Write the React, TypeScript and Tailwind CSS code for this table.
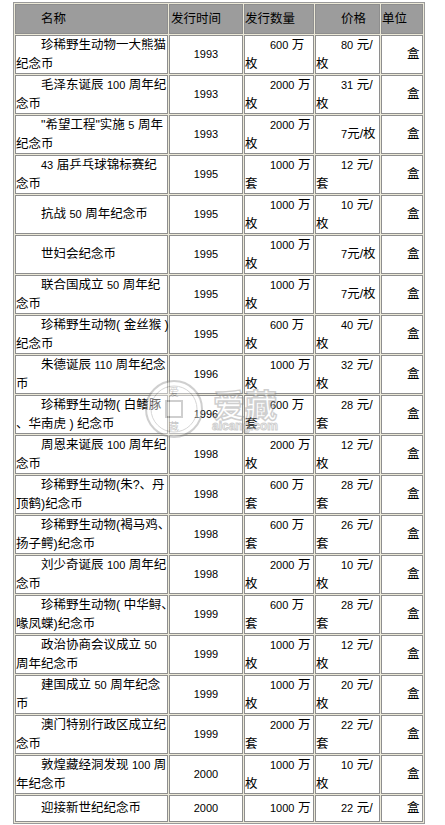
import React from 'react';

type Row = {
  name: string[];
  year: string;
  qty: string[];
  price: string[];
  short?: boolean;
};

const rows: Row[] = [
  { name: ['珍稀野生动物一大熊猫', '纪念币'], year: '1993', qty: ['600 万', '枚'], price: ['80 元/', '枚'] },
  { name: ['毛泽东诞辰 100 周年纪', '念币'], year: '1993', qty: ['2000 万', '枚'], price: ['31 元/', '枚'] },
  { name: ['"希望工程"实施 5 周年', '纪念币'], year: '1993', qty: ['2000 万', '枚'], price: ['7元/枚'] },
  { name: ['43 届乒乓球锦标赛纪', '念币'], year: '1995', qty: ['1000 万', '套'], price: ['12 元/', '套'] },
  { name: ['抗战 50 周年纪念币'], year: '1995', qty: ['1000 万', '枚'], price: ['10 元/', '枚'] },
  { name: ['世妇会纪念币'], year: '1995', qty: ['1000 万', '枚'], price: ['7元/枚'] },
  { name: ['联合国成立 50 周年纪', '念币'], year: '1995', qty: ['1000 万', '枚'], price: ['7元/枚'] },
  { name: ['珍稀野生动物( 金丝猴 )', '纪念币'], year: '1995', qty: ['600 万', '枚'], price: ['40 元/', '枚'] },
  { name: ['朱德诞辰 110 周年纪念', '币'], year: '1996', qty: ['1000 万', '枚'], price: ['32 元/', '枚'] },
  { name: ['珍稀野生动物( 白鳍豚', '、华南虎 ) 纪念币'], year: '1996', qty: ['600 万', '套'], price: ['28 元/', '套'] },
  { name: ['周恩来诞辰 100 周年纪', '念币'], year: '1998', qty: ['2000 万', '枚'], price: ['12 元/', '枚'] },
  { name: ['珍稀野生动物(朱?、丹', '顶鹤)纪念币'], year: '1998', qty: ['600 万', '套'], price: ['28 元/', '套'] },
  { name: ['珍稀野生动物(褐马鸡、', '扬子鳄)纪念币'], year: '1998', qty: ['600 万', '套'], price: ['26 元/', '套'] },
  { name: ['刘少奇诞辰 100 周年纪', '念币'], year: '1998', qty: ['2000 万', '枚'], price: ['10 元/', '枚'] },
  { name: ['珍稀野生动物( 中华鲟、', '喙凤蝶)纪念币'], year: '1999', qty: ['600 万', '套'], price: ['28 元/', '套'] },
  { name: ['政治协商会议成立 50', '周年纪念币'], year: '1999', qty: ['1000 万', '枚'], price: ['12 元/', '枚'] },
  { name: ['建国成立 50 周年纪念', '币'], year: '1999', qty: ['1000 万', '枚'], price: ['20 元/', '枚'] },
  { name: ['澳门特别行政区成立纪', '念币'], year: '1999', qty: ['2000 万', '套'], price: ['22 元/', '套'] },
  { name: ['敦煌藏经洞发现 100 周', '年纪念币'], year: '2000', qty: ['1000 万', '枚'], price: ['10 元/', '枚'] },
  { name: ['迎接新世纪纪念币'], year: '2000', qty: ['1000 万'], price: ['22 元/'], short: true },
];

// digits are set a bit smaller, like the Tahoma numbers in the original
const T = ({ s }: { s: string }) => (
  <>
    {s.split(/(\d+)/).map((p, i) =>
      /^\d+$/.test(p) ? (
        <span key={i} className="text-[11px]">
          {p}
        </span>
      ) : (
        p
      )
    )}
  </>
);

const Lines = ({ lines }: { lines: string[] }) => (
  <>
    {lines.map((l, i) => (
      <div key={i} className={i === 0 ? 'whitespace-nowrap pl-[25px]' : 'whitespace-nowrap'}>
        <T s={l} />
      </div>
    ))}
  </>
);

const td = 'border border-[#8e8e8e] p-0 align-middle bg-white';
const th = 'border border-[#8e8e8e] p-0 align-middle bg-[#9c9c9c] font-normal text-left h-[30px]';

const Watermark = () => (
  <div className="pointer-events-none absolute left-[144px] top-[378px] flex items-center gap-[8px] opacity-40">
    <svg width="60" height="62" viewBox="0 0 60 62">
      <circle cx="30" cy="31" r="28" fill="#fff" stroke="#8a8a8a" strokeWidth="2" />
      <circle cx="30" cy="31" r="23" fill="none" stroke="#9a9a9a" strokeWidth="1" />
      <rect x="22" y="23" width="16" height="16" fill="#fff" stroke="#8a8a8a" strokeWidth="2" />
      <text x="30" y="18" fontSize="10" textAnchor="middle" fill="#777" fontFamily="Noto Sans CJK SC">爱</text>
      <text x="30" y="52" fontSize="10" textAnchor="middle" fill="#777" fontFamily="Noto Sans CJK SC">藏</text>
    </svg>
    <div className="flex flex-col items-center">
      <div className="text-[32px] leading-[34px] font-bold text-white [-webkit-text-stroke:1.5px_#8a8a8a] font-['Noto_Sans_CJK_SC',sans-serif]">
        爱藏
      </div>
      <div className="text-[12px] leading-[12px] font-bold text-white [-webkit-text-stroke:1px_#8a8a8a] font-['Liberation_Sans',sans-serif]">
        aicang.com
      </div>
    </div>
  </div>
);

export default function App() {
  return (
    <div className="relative min-h-[825px] bg-white pt-[2px] font-['Liberation_Sans','Noto_Sans_CJK_SC',sans-serif] text-[12.5px] leading-[18.5px] text-black">
      <table className="ml-[13px] w-[412px] table-fixed border-separate border-spacing-[1px] border border-[#9a9a9a] bg-[#ece9d8]">
        <colgroup>
          <col className="w-[153px]" />
          <col className="w-[74px]" />
          <col className="w-[70px]" />
          <col className="w-[65px]" />
          <col className="w-[42px]" />
        </colgroup>
        <thead>
          <tr>
            <th className={th + ' pl-[25px]'}>名称</th>
            <th className={th + ' pl-[1px]'}>发行时间</th>
            <th className={th}>发行数量</th>
            <th className={th + ' pl-[25px]'}>价格</th>
            <th className={th}>单位</th>
          </tr>
        </thead>
        <tbody>
          {rows.map((r, i) => (
            <tr key={i} className={r.short ? 'h-[27px]' : 'h-[39px]'}>
              <td className={td}>
                <Lines lines={r.name} />
              </td>
              <td className={td + ' text-center'}>
                <T s={r.year} />
              </td>
              <td className={td}>
                <Lines lines={r.qty} />
              </td>
              <td className={td}>
                <Lines lines={r.price} />
              </td>
              <td className={td}>
                <Lines lines={['盒']} />
              </td>
            </tr>
          ))}
        </tbody>
      </table>
      <Watermark />
    </div>
  );
}
